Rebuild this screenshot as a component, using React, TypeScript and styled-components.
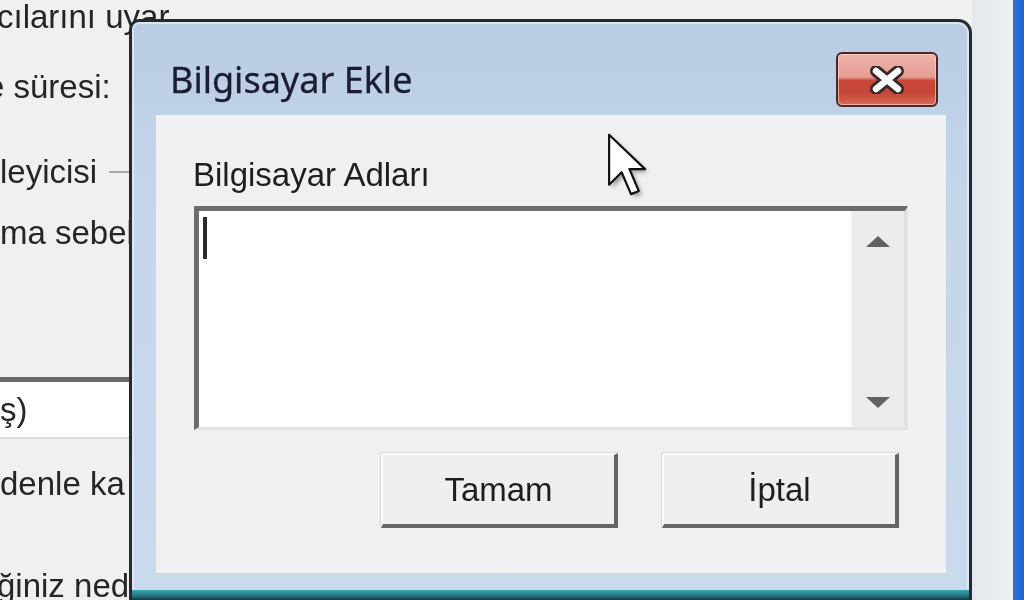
import styled, { createGlobalStyle } from 'styled-components'

const GlobalStyle = createGlobalStyle`
	html, body {
		margin: 0;
		padding: 0;
		background: #f0f0f0;
		overflow: hidden;
	}
`

const backLines = {
	top: [
		{ text: 'cılarını uyar', top: -3, shift: -3 },
		{ text: 'e süresi:', top: 30, shift: -14 },
	],
	after: { text: 'ma sebeb', top: 21, shift: 0 },
	bottom: [
		{ text: 'denle ka', top: 25, shift: 0 },
		{ text: 'ğiniz ned', top: 62, shift: -3 },
	],
}

function CloseGlyph() {
	return (
		<svg width='40' height='28' viewBox='0 0 40 28'>
			<path d='M9 5 L31 23 M31 5 L9 23' stroke='#3a2a2a' strokeWidth='12' strokeLinecap='round' />
			<path d='M9 5 L31 23 M31 5 L9 23' stroke='#fbfbfb' strokeWidth='6.5' strokeLinecap='round' />
		</svg>
	)
}

function Arrow({ down }: { down?: boolean }) {
	return (
		<svg width='26' height='14' viewBox='0 0 26 14'>
			<path d={down ? 'M1 2 L25 2 L13 13 Z' : 'M1 12 L25 12 L13 1 Z'} fill='#626262' />
		</svg>
	)
}

function MouseCursor() {
	return (
		<CursorWrap>
			<svg width='50' height='74' viewBox='-1 -1 16 22'>
				<defs>
					<filter id='cs' x='-50%' y='-50%' width='200%' height='200%'>
						<feGaussianBlur stdDeviation='0.6' />
					</filter>
				</defs>
				<path
					d='M1 1 L1 17 L5 13 L8 20 L10.5 19 L7.5 12 L12.5 12 Z'
					fill='#000'
					opacity='0.35'
					filter='url(#cs)'
				/>
				<path
					d='M0 0 L0 16 L4 12 L7 19 L9.5 18 L6.5 11 L11.5 11 Z'
					fill='#fff'
					stroke='#111'
					strokeWidth='0.7'
					strokeLinejoin='round'
				/>
			</svg>
		</CursorWrap>
	)
}

export default function App() {
	return (
		<>
			<GlobalStyle />
			<Screen>
				<BackWindow>
					<Pane>
						{backLines.top.map((l) => (
							<BackRow key={l.text} $top={l.top} $shift={l.shift}>
								{l.text}
							</BackRow>
						))}
						<GroupRow>
							<span>leyicisi</span>
							<GroupLine />
						</GroupRow>
						<BackRow $top={backLines.after.top} $shift={backLines.after.shift}>
							{backLines.after.text}
						</BackRow>
						<ListHeader />
						<ListItem>ş)</ListItem>
						{backLines.bottom.map((l) => (
							<BackRow key={l.text} $top={l.top} $shift={l.shift}>
								{l.text}
							</BackRow>
						))}
					</Pane>
					<SideStrip>
						<BlueBar />
					</SideStrip>
				</BackWindow>

				<Dialog>
					<TitleBar>
						<Title>Bilgisayar Ekle</Title>
						<CloseButton>
							<CloseGlyph />
						</CloseButton>
					</TitleBar>
					<Client>
						<FieldLabel>Bilgisayar Adları</FieldLabel>
						<TextBox>
							<TextArea>
								<Caret />
							</TextArea>
							<ScrollBar>
								<Arrow />
								<Arrow down />
							</ScrollBar>
						</TextBox>
						<ButtonRow>
							<DialogButton>Tamam</DialogButton>
							<DialogButton>İptal</DialogButton>
						</ButtonRow>
					</Client>
					<FrameBottom />
				</Dialog>

				<MouseCursor />
			</Screen>
		</>
	)
}

const Screen = styled.div`
	width: 1024px;
	height: 600px;
	position: relative;
	overflow: hidden;
	background: #f0f0f0;
	font-family: 'Liberation Sans', Arial, sans-serif;
	color: #1e1e1e;
	filter: blur(0.4px);
`

const BackWindow = styled.div`
	display: flex;
	height: 100%;
`

const Pane = styled.div`
	flex: 1;
	min-width: 0;
	display: flex;
	flex-direction: column;
	overflow: hidden;
`

const BackRow = styled.div<{ $top: number; $shift: number }>`
	height: 40px;
	line-height: 40px;
	font-size: 33px;
	color: #262626;
	white-space: nowrap;
	margin-top: ${(p) => p.$top}px;
	margin-left: ${(p) => p.$shift}px;
	flex-shrink: 0;
`

const GroupRow = styled.div`
	height: 40px;
	margin-top: 45px;
	display: flex;
	align-items: center;
	gap: 12px;
	font-size: 33px;
	color: #262626;
	flex-shrink: 0;
`

const GroupLine = styled.div`
	flex: 1;
	height: 2px;
	background: #a8a8a8;
`

const ListHeader = styled.div`
	margin-top: 124px;
	height: 5px;
	background: #6a6a6a;
	flex-shrink: 0;
`

const ListItem = styled.div`
	height: 55px;
	line-height: 55px;
	font-size: 33px;
	color: #262626;
	background: #ffffff;
	border-bottom: 2px solid #dcdcdc;
	flex-shrink: 0;
`

const SideStrip = styled.div`
	width: 52px;
	flex-shrink: 0;
	display: flex;
	justify-content: flex-end;
	background: linear-gradient(90deg, #e4e8ed 0%, #eceff2 70%, #f5f6f7 100%);
`

const BlueBar = styled.div`
	width: 11px;
	flex-shrink: 0;
	background: linear-gradient(90deg, #2c72d8, #1d63cc);
`

const Dialog = styled.div`
	position: absolute;
	left: 129px;
	top: 19px;
	width: 843px;
	height: 581px;
	box-sizing: border-box;
	border: 3px solid #262a30;
	border-bottom: none;
	border-radius: 10px 14px 0 0;
	background: linear-gradient(180deg, #b9cce4 0%, #c4d6ea 30%, #c9daed 100%);
	box-shadow: inset 0 0 0 2px #dbe6f3;
	display: flex;
	flex-direction: column;
`

const TitleBar = styled.div`
	height: 95px;
	box-sizing: border-box;
	padding: 30px 31px 0 38px;
	display: flex;
	justify-content: space-between;
	align-items: flex-start;
`

const Title = styled.div`
	font-family: 'Noto Sans', 'Open Sans', sans-serif;
	font-size: 36px;
	line-height: 55px;
	color: #1c1c34;
	-webkit-text-stroke: 0.3px #1c1c34;
`

const CloseButton = styled.div`
	width: 102px;
	height: 55px;
	box-sizing: border-box;
	border: 2px solid #4a2826;
	border-radius: 6px;
	background: linear-gradient(
		180deg,
		#eeb3aa 0%,
		#e59e94 45%,
		#c9493b 52%,
		#c44636 75%,
		#d56a5c 100%
	);
	box-shadow: inset 0 0 0 1px rgba(255, 220, 215, 0.6);
	display: flex;
	align-items: center;
	justify-content: center;
`

const Client = styled.div`
	margin: 0 23px 0 24px;
	height: 458px;
	box-sizing: border-box;
	background: #f0f0f0;
	padding: 40px 38px 45px 37px;
	display: flex;
	flex-direction: column;
`

const FieldLabel = styled.div`
	font-size: 33px;
	line-height: 40px;
	height: 40px;
	color: #1e1e1e;
`

const TextBox = styled.div`
	margin-top: 11px;
	margin-left: 1px;
	height: 224px;
	box-sizing: border-box;
	border-top: 5px solid #6c6c6c;
	border-left: 5px solid #6c6c6c;
	border-right: 3px solid #e2e2e2;
	border-bottom: 3px solid #e2e2e2;
	display: flex;
`

const TextArea = styled.div`
	flex: 1;
	background: #ffffff;
	padding: 6px 0 0 4px;
`

const Caret = styled.div`
	width: 4px;
	height: 42px;
	background: #2a2a2a;
`

const ScrollBar = styled.div`
	width: 52px;
	background: #ececec;
	border-left: 2px solid #f6f6f6;
	border-right: 1px solid #e0e0e0;
	display: flex;
	flex-direction: column;
	justify-content: space-between;
	align-items: center;
	padding: 24px 0 18px;
`

const ButtonRow = styled.div`
	margin-top: 23px;
	display: flex;
	justify-content: flex-end;
	gap: 44px;
	padding-right: 9px;
`

const DialogButton = styled.div`
	width: 237px;
	height: 75px;
	box-sizing: border-box;
	background: #efefef;
	border-top: 2px solid #fbfbfb;
	border-left: 2px solid #fbfbfb;
	border-right: 4px solid #656565;
	border-bottom: 4px solid #656565;
	box-shadow: 0 -1px 0 #d8d8d8, -1px 0 0 #d8d8d8;
	display: flex;
	align-items: center;
	justify-content: center;
	font-size: 33px;
	color: #1e1e1e;
`

const FrameBottom = styled.div`
	margin-top: 17px;
	height: 10px;
	background: linear-gradient(180deg, #3aa3ad 0%, #2b8893 40%, #163a44 100%);
`

const CursorWrap = styled.div`
	position: absolute;
	left: 606px;
	top: 129px;
	pointer-events: none;
`
